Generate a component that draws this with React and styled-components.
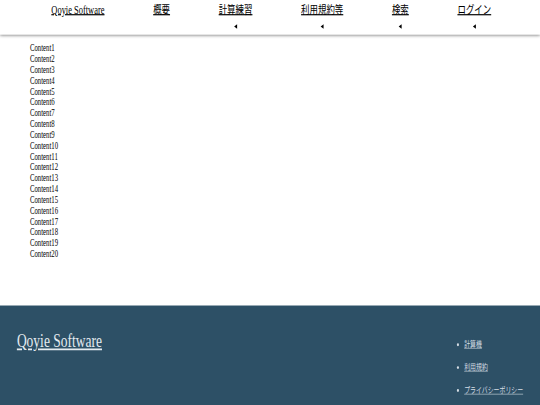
import React from 'react';
import styled, { createGlobalStyle } from 'styled-components';

const GlobalStyle = createGlobalStyle`
    html, body {
        margin: 0;
        padding: 0;
        background-color: #ffffff;
        overflow: hidden;
    }
`;

// the shot is a 1280 wide page squeezed into 540x405
const StageDiv = styled.div`
    width: 540px;
    height: 405px;
    overflow: hidden;
`;

const PageDiv = styled.div`
    width: 1280px;
    height: 688px;
    transform: scale(0.421875, 0.58866);
    transform-origin: 0 0;
    display: flex;
    flex-direction: column;
    font-family: "Liberation Serif", "Noto Sans CJK JP", serif;
    color: #000;
`;

const HeaderDiv = styled.header`
    height: 59px;
    flex-shrink: 0;
    background-color: #ffffff;
    box-shadow: 0 3px 6px rgba(0, 0, 0, 0.5);
    position: relative;
    z-index: 1;
`;

const NavList = styled.ul`
    margin: 0;
    padding: 5px 58px 0 64px;
    list-style: none;
    display: flex;
    justify-content: space-around;
    align-items: flex-start;
`;

const NavItem = styled.li`
    display: flex;
    flex-direction: column;
    align-items: center;
`;

const NavLink = styled.a`
    font-size: 20px;
    line-height: 23px;
    color: #000;
    text-decoration: underline;
    white-space: nowrap;
`;

const Arrow = styled.span`
    margin-top: 13px;
    width: 0;
    height: 0;
    border-top: 4px solid transparent;
    border-bottom: 4px solid transparent;
    border-right: 7px solid #000;
`;

const MainDiv = styled.main`
    flex: 1;
    padding: 14px 0 0 71px;
`;

const ContentLine = styled.div`
    font-size: 16px;
    line-height: 18.4px;
`;

const FooterDiv = styled.footer`
    height: 169px;
    flex-shrink: 0;
    background-color: #2d5066;
    display: flex;
    justify-content: space-between;
    align-items: flex-start;
    padding: 42px 40px 0 40px;
    box-sizing: border-box;
`;

const FooterTitle = styled.a`
    font-size: 32px;
    line-height: 37px;
    color: #e4ebf0;
    text-decoration: underline;
`;

const FooterList = styled.ul`
    margin: 4px 0 0 0;
    padding: 0;
    list-style: disc;
    color: #d6dee5;
`;

const FooterItem = styled.li`
    font-family: "Noto Sans CJK JP", sans-serif;
    font-size: 14px;
    line-height: 39px;
`;

const FooterLink = styled.a`
    color: #d6dee5;
    text-decoration: underline;
`;

const navItems = [
    { label: 'Qoyie Software', menu: false },
    { label: '概要', menu: false },
    { label: '計算練習', menu: true },
    { label: '利用規約等', menu: true },
    { label: '検索', menu: true },
    { label: 'ログイン', menu: true },
];

const footerLinks = ['計算機', '利用規約', 'プライバシーポリシー'];

const App = () => {
    const lines = Array.from({ length: 20 }, (_, i) => `Content${i + 1}`);

    return (
        <StageDiv>
            <GlobalStyle />
            <PageDiv>
                <HeaderDiv>
                    <NavList>
                        {navItems.map((item) => (
                            <NavItem key={item.label}>
                                <NavLink href="#">{item.label}</NavLink>
                                {item.menu && <Arrow />}
                            </NavItem>
                        ))}
                    </NavList>
                </HeaderDiv>

                <MainDiv>
                    {lines.map((line) => (
                        <ContentLine key={line}>{line}</ContentLine>
                    ))}
                </MainDiv>

                <FooterDiv>
                    <FooterTitle href="#">Qoyie Software</FooterTitle>
                    <FooterList>
                        {footerLinks.map((link) => (
                            <FooterItem key={link}>
                                <FooterLink href="#">{link}</FooterLink>
                            </FooterItem>
                        ))}
                    </FooterList>
                </FooterDiv>
            </PageDiv>
        </StageDiv>
    );
};

export default App;
